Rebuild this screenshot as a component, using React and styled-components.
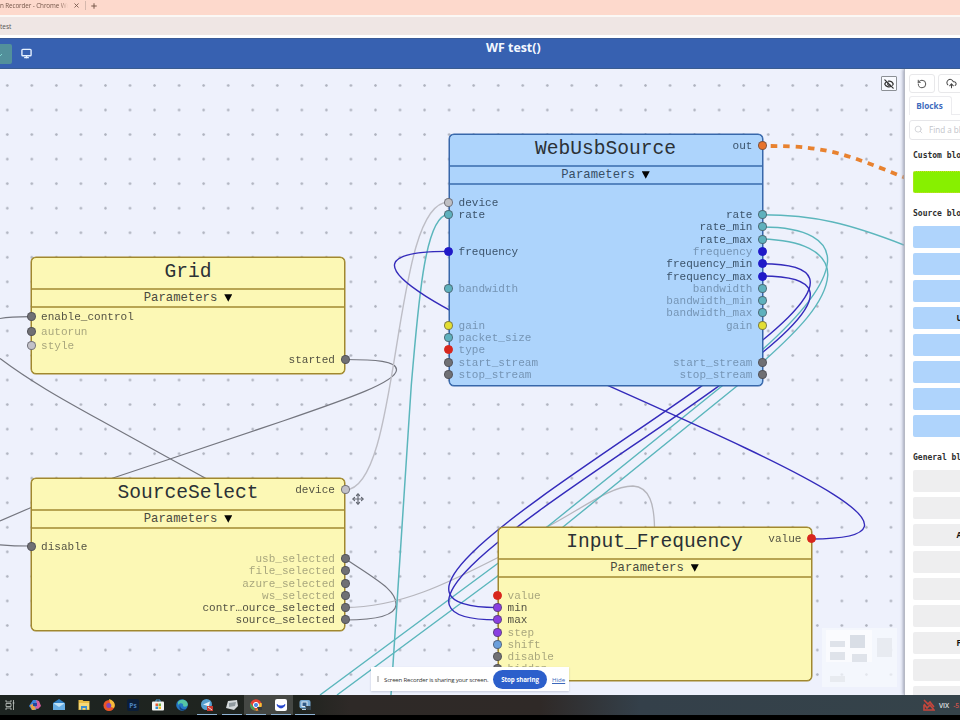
import React from "react";
import styled, { createGlobalStyle } from "styled-components";
import { EyeOff, RotateCcw, CloudUpload, Search, Monitor, Move, X, Plus } from "lucide-react";

const Global = createGlobalStyle`
  * { box-sizing: border-box; }
  body { margin: 0; overflow: hidden; background: #000; }
`;
const Screen = styled.div`
  width: 960px; height: 720px; display: flex; flex-direction: column;
  overflow: hidden; background: #000; position: relative;
  font-family: "Open Sans", sans-serif;
`;
const TabStrip = styled.div`
  height: 15px; flex: none; background: #fdd9cc; color: #76584b;
  display: flex; align-items: center; font-size: 6.3px; padding-bottom: 4px;
  white-space: nowrap;
`;
const TabTitle = styled.span`
  width: 68px; overflow: hidden; margin-right: 5px; letter-spacing: -0.1px;
  mask-image: linear-gradient(90deg, #000 88%, transparent);
`;
const TabRule = styled.i`width: 1px; height: 9px; background: #d5b8ad; margin: 0 4px 0 5px;`;
const UrlBar = styled.div`
  height: 23px; flex: none; background: #efe6e4; border-top: 2px solid #fbf8f5; border-bottom: 3px solid #fff;
  font-size: 6.5px; line-height: 19px; color: #555;
`;
const AppHeader = styled.header`
  height: 31px; flex: none; background: #3761b1; display: flex; align-items: center;
  border-top: 1px solid #3a5a96; border-bottom: 1px solid #3a5c90; color: #e6f1ff;
`;
const CheckButton = styled.div`
  width: 12px; height: 20px; border-radius: 0 2px 2px 0; background: #52909b; color: #7fd6d0;
  margin-right: 9px; display: flex; align-items: center;
`;
const AppTitle = styled.h1`
  margin: 0 0 13px 454px; font-size: 12.4px; font-weight: 700; color: #f4f8ff; line-height: 17px;
`;
const Main = styled.main`height: 626px; flex: none; display: flex; overflow: hidden;`;
const Canvas = styled.div`
  width: 904px; flex: none; position: relative; overflow: hidden; background-color: #eef1fc;
  background-image: radial-gradient(circle, #aeb2be 0 0.9px, rgba(174,178,190,0) 1.6px);
  background-size: 24.56px 24.56px; background-position: -5px 4.2px;
`;
const Wires = styled.svg`position: absolute; inset: 0; display: block;`;

const Node = styled.section`
  position: absolute; left: ${p => p.$x}px; top: ${p => p.$y - 69}px;
  width: 314px; height: ${p => p.$h}px; border-radius: 5px;
  border: 1px solid ${p => p.$line}; box-shadow: 0 0 0 0.5px ${p => p.$line};
  background: ${p => p.$fill}; color: ${p => p.$ink};
  font-family: "Liberation Mono", monospace;
`;
const NodeTitle = styled.div`
  height: 30px; text-align: center;
  font-size: 19.6px; line-height: 29px; color: #2b3136;
`;
const NodeParams = styled.div`
  height: 20px; border: solid ${p => p.$soft}; border-width: 2px 0;
  display: flex; justify-content: center; align-items: center; gap: 7px;
  font-size: 12.25px; line-height: 16px;
`;
const Arrow = styled.i`
  width: 8px; height: 7.5px; background: #050505; clip-path: polygon(0 0, 100% 0, 50% 100%);
`;
const Port = styled.div`
  position: absolute; ${p => (p.$right ? "right" : "left")}: -5.5px; top: ${p => p.$y}px;
  display: flex; flex-direction: ${p => (p.$right ? "row-reverse" : "row")};
  align-items: center; gap: 5.5px; height: 12px; font-size: 11.05px; line-height: 12px; white-space: nowrap;
`;
const Dot = styled.i`
  width: 9px; height: 9px; border-radius: 50%; background: ${p => p.$c};
  border: 1px solid ${p => p.$edge || "rgba(60,60,70,.6)"};
`;
const PortName = styled.span`opacity: ${p => (p.$dim ? 0.47 : 0.95)}; padding-top: 1px;`;

const EyeButton = styled.div`
  position: absolute; left: 881px; top: 7px; width: 16px; height: 15px; background: #f8faff;
  border: 1px solid #8c9096; border-radius: 1px; display: grid; place-items: center; color: #333;
`;
const Cursor = styled.div`position: absolute; left: 352px; top: 424px; height: 12px; color: #666a74; display: flex;`;
const MiniMap = styled.div`
  position: absolute; left: 822px; top: 559px; width: 75px; height: 59px; background: rgba(247,249,253,.72);
`;
const MiniView = styled.div`position: absolute; left: 4px; top: 2px; width: 46px; height: 32px; background: #fafbfe;`;
const MiniBlock = styled.div`
  position: absolute; left: ${p => p.$x}px; top: ${p => p.$y}px; width: ${p => p.$w}px; height: ${p => p.$h}px;
  background: ${p => p.$c || "#dfe3ea"};
`;

const Sidebar = styled.aside`
  flex: 1; min-width: 0; background: #fff; border-left: 1px solid #b6b9c4; overflow: hidden;
  box-shadow: -1px 0 3px #9ea3b5; position: relative; padding-top: 5px;
`;
const Tools = styled.div`display: flex; gap: 3px; margin-left: 4px; height: 19px;`;
const ToolButton = styled.div`
  width: 26px; height: 19px; flex: none; border: 1px solid #e8e8ea; border-radius: 3px;
  display: grid; place-items: center; color: #444;
`;
const Tabs = styled.div`margin: 3px 0 0 4px; height: 19px; display: flex;`;
const Tab = styled.div`
  width: 43px; flex: none; border: 1px solid #ececef; border-bottom: 0; border-radius: 3px 3px 0 0;
  color: #3e6bbd; font: 700 8.2px/18px "Open Sans", sans-serif; text-align: center; padding-right: 2px;
`;
const TabRest = styled.div`flex: 1; border-bottom: 1px solid #ececef;`;
const SearchBox = styled.div`
  margin: 5px 0 0 4px; width: 190px; height: 20px; border: 1px solid #e6e6e9; border-radius: 3px;
  display: flex; align-items: center; gap: 6px; padding-left: 4px; color: #c2c4ca;
  font-size: 8.1px; line-height: 16px; padding-bottom: 1px; white-space: nowrap;
`;
const GroupTitle = styled.h2`
  margin: ${p => p.$top}px 0 0 8px; height: 12px; white-space: nowrap; color: #2e2e2e;
  font: 700 8px/12px "DejaVu Sans Mono", monospace;
`;
const BlockList = styled.div`
  margin: ${p => p.$top}px 0 0 8px; display: grid; grid-auto-rows: 22px; gap: 5px; width: 190px;
`;
const Block = styled.div`
  background: ${p => p.$c}; border-radius: 2px; padding-left: 43.5px; ${p => p.$dotted && "border: 1px dotted #c9dc2c;"}
  font: 700 8px/22px "Open Sans", sans-serif; color: #111;
`;

const ShareBar = styled.div`
  position: absolute; left: 371px; top: 667px; width: 198px; height: 24px; background: #fff;
  box-shadow: 0 1px 2px rgba(70,80,110,.25); display: flex; align-items: center; font-size: 6.1px; color: #333;
  padding-left: 6px; white-space: nowrap;
`;
const Grip = styled.i`width: 2px; height: 6px; border: solid #ccc; border-width: 0 1px; margin-right: 5px;`;
const ShareText = styled.span`width: 109px; letter-spacing: -0.2px;`;
const StopButton = styled.div`
  width: 54px; height: 19px; border-radius: 10px; background: #2c5fcb; color: #fff; font-weight: 700;
  font-size: 6.2px; letter-spacing: -0.08px; line-height: 19px; text-align: center; margin-right: 5px;
`;
const HideLink = styled.a`color: #3d68bb; text-decoration: underline;`;

const Taskbar = styled.footer`
  height: 20px; flex: none; display: flex; align-items: center; justify-content: space-between;
  background: linear-gradient(90deg, #1d2421 0, #20241f 300px, #2e2927 350px, #2f2927 540px, #34404a 640px, #35434a 100%);
`;
const TaskIcons = styled.div`display: flex; margin-left: -2px;`;
const Task = styled.div`
  width: 24.6px; height: 20px; display: grid; place-items: center; background: ${p => (p.$on ? "#454844" : "none")};
`;
const TaskGlyph = styled.div`
  height: 20px; width: 20px; display: grid; place-items: center;
  box-shadow: ${p => (p.$run ? "inset 0 -1px #8fb3d4" : "none")};
`;
const Ticker = styled.div`
  width: 37px; display: flex; align-items: center; gap: 4px; overflow: hidden; white-space: nowrap;
  font: 600 6.6px "Open Sans", sans-serif; color: #e0e4e6;
`;
const TickerIcon = styled.svg`flex: none;`;
const Loss = styled.span`color: #d0524a;`;

const TEAL = "#5fb1bd", BLUE = "#2019c8", GRAY = "#707074", LIGHT = "#c2c1c8", RED = "#d8261d",
  YEL = "#e3de33", PUR = "#8a3fe0", SKY = "#6b9fdc";

const yellow = { fill: "#fcf8b5", line: "#a1882e", soft: "#b8a552", ink: "#4a4a3e" };
const blue = { fill: "#add4fc", line: "#3767aa", soft: "#5585c0", ink: "#364d64" };

const nodes = [
  { name: "Grid", x: 31, y: 257, h: 117, theme: yellow,
    left: [["enable_control", 316.7, GRAY], ["autorun", 331.3, GRAY, 1], ["style", 345.6, LIGHT, 1]],
    right: [["started", 359.5, GRAY]] },
  { name: "SourceSelect", x: 31, y: 478, h: 153, theme: yellow,
    left: [["disable", 546.2, GRAY]],
    right: [["device", 489.8, LIGHT], ["usb_selected", 558.3, GRAY, 1], ["file_selected", 570.6, GRAY, 1],
      ["azure_selected", 583, GRAY, 1], ["ws_selected", 595.2, GRAY, 1],
      ["contr…ource_selected", 607.5, GRAY], ["source_selected", 619.8, GRAY]] },
  { name: "WebUsbSource", x: 448.5, y: 134, h: 252, theme: blue,
    left: [["device", 202.3, "#bfbfc3"], ["rate", 214.6, TEAL], ["frequency", 251.4, BLUE], ["bandwidth", 288.3, TEAL, 1],
      ["gain", 325.3, YEL, 1], ["packet_size", 337.6, TEAL, 1], ["type", 349.9, RED, 1],
      ["start_stream", 362.1, GRAY, 1], ["stop_stream", 374.3, GRAY, 1]],
    right: [["out", 145.9, "#e8732b"], ["rate", 214.6, TEAL], ["rate_min", 226.9, TEAL], ["rate_max", 239.2, TEAL],
      ["frequency", 251.4, BLUE, 1], ["frequency_min", 263.8, BLUE], ["frequency_max", 276, BLUE],
      ["bandwidth", 288.3, TEAL, 1], ["bandwidth_min", 300.6, TEAL, 1], ["bandwidth_max", 312.9, TEAL, 1],
      ["gain", 325.3, YEL, 1], ["start_stream", 362.1, GRAY, 1], ["stop_stream", 374.3, GRAY, 1]] },
  { name: "Input_Frequency", x: 497.5, y: 527, h: 154, theme: yellow,
    left: [["value", 595.3, RED, 1], ["min", 607.6, PUR], ["max", 619.9, PUR], ["step", 632.2, PUR, 1],
      ["shift", 644.4, SKY, 1], ["disable", 656.6, GRAY, 1], ["hidden", 668.9, GRAY, 1]],
    right: [["value", 538.8, RED]] },
];

const wires = [
  ["M0 318.5 Q10 317 30 316.7", "#74767f", 1.2],
  ["M0 544.8 Q14 546 30 546", "#74767f", 1.2],
  ["M345 359.5 C375 359.5 397 361 396.5 370 C396 382 350 398 283 421 L170 459 L113 478 L30 508 L0 521", "#74767f", 1.2],
  ["M0 358.5 C30 381 60 398 100 420 L205 478 L345 558.5 C375 579 397 590 396 605 C395 617 370 620 345 620", "#74767f", 1.2],
  ["M345 607.5 C400 607.5 450 582 497 558 L547 527 C580 510 610 486 633 486 C650 487 654 505 654.5 527", "#b6b6bd", 1.3],
  ["M345 490 C402 490 391 202.3 448 202.3", "#bebec6", 1.4],
  ["M448 214.6 C424 216 418 310 411.3 385 C405 480 399 570 391 695", "#5bb6bc", 1.5],
  ["M762 214.8 C815 214.8 850 224 904 245", "#5bb6bc", 1.4],
  ["M762 227 C808 227 829 241 827.5 262 C825 290 790 325 762 350 L722 386 L547 527 L497 564 L320 695", "#5bb6bc", 1.4],
  ["M762 239 C800 240 828 251 827.8 275 C826 303 795 333 765 360 L737 386 L563 527 L497 576.5 L337 695", "#5bb6bc", 1.4],
  ["M811 539 C1091 539 168 251.4 448 251.4", "#342bbb", 1.4],
  ["M762 263.8 C1002 263.8 257 607.6 497 607.6", "#342bbb", 1.4],
  ["M762 276 C1002 276 257 619.9 497 619.9", "#342bbb", 1.4],
];

function FlowNode({ n }) {
  const t = n.theme;
  const port = (right) => ([label, y, c, dim]) => (
    <Port key={label} $right={right} $y={y - n.y - 7}>
      <Dot $c={c} $edge={c === BLUE || c === RED ? c : undefined} />
      <PortName $dim={dim}>{label}</PortName>
    </Port>
  );
  return (
    <Node $x={n.x} $y={n.y} $h={n.h} $line={t.line} $fill={t.fill} $ink={t.ink}>
      <NodeTitle>{n.name}</NodeTitle>
      <NodeParams $soft={t.soft}>Parameters<Arrow /></NodeParams>
      {n.left.map(port(false))}
      {n.right.map(port(true))}
    </Node>
  );
}

const taskIcons = [
  { d: <g fill="none" stroke="#c5cbc8" strokeWidth=".8"><path d="M2 1v2h5V1M2 11V9h5v2M2 4.500h5v3H2zM9.500 1v10M8.500 4h2" /></g> },
  { d: <><path d="M4 1h4l2 4-3 6H3L0 7z" fill="#3c84dc" /><path d="M7 1l3 1 2 5-3 3-3-1 2-4z" fill="#d85fa0" /><path d="M1 6l3-1 3 5-2 1H3z" fill="#e9a345" /><path d="M4 4h4v3H4z" fill="#27459a" /></> },
  { d: <><path d="M0 4l6-4 6 4v7H0z" fill="#2f7fc4" /><path d="M1 4h10v6H1z" fill="#bfe2f6" /><path d="M0 4l6 4 6-4v7H0z" fill="#69aee4" /></> },
  { d: <><path d="M0.500 1h4l1 1h6v9h-11z" fill="#e9bd45" /><path d="M1 4h10v6H1z" fill="#f6d978" /><path d="M3 7h6v4H7.500V9h-3v2H3z" fill="#3c8dce" /></> },
  { d: <><circle cx="6" cy="6.500" r="5.500" fill="#ec5528" /><path d="M6 0c5 1 7 6 5 9L8 8z" fill="#f7bc3a" /><circle cx="5.800" cy="6.500" r="2.500" fill="#8347b5" /></> },
  { d: <><rect width="12" height="12" rx="2" fill="#0b1e38" /><text x="6" y="8.500" fontSize="6.500" fontWeight="700" textAnchor="middle" fill="#4b83c0" fontFamily="Open Sans">Ps</text></> },
  { d: <><path d="M4 3V1h4v2" stroke="#4da2d8" fill="none" /><rect y="2.500" width="12" height="9" rx="1" fill="#f2f4f2" /><path d="M3.500 4.500H6V7H3.500z" fill="#e65b32" /><path d="M6.500 4.500H9V7H6.500z" fill="#6fb345" /><path d="M3.500 7.500H6V10H3.500z" fill="#348ed2" /><path d="M6.500 7.500H9V10H6.500z" fill="#edb92d" /></> },
  { d: <><circle cx="6" cy="6" r="5.800" fill="#2477c4" /><path d="M2 3c3-4 10-2 9.800 3C11 8 8 8 7 7c1-3-3-4-5-1z" fill="#55c5a4" /><path d="M4 6c0 4 4 5 6 4-3 3-8 1-6-4z" fill="#123f7d" /></> },
  { run: 1, d: <><circle cx="5.500" cy="5.500" r="5.500" fill="#579fd0" /><path d="M2 5.500l7-3-1.500 6-2-2z" fill="#e1eef8" /><path d="M6 7h6v5H6z" fill="#ca3a32" /><path d="M7 8l4 3" stroke="#fff" strokeWidth=".8" /></> },
  { run: 1, d: <><path d="M2 2l9-1 1 6-4 4-8-2z" fill="#d3d8da" /><path d="M3 4l7-1-1 4-6 1z" fill="#909a9f" /></> },
  { run: 1, on: 1, d: <><circle cx="6" cy="6" r="5.800" fill="#e54233" /><path d="M.5 4L6 11.800A5.800 5.800 0 0 1 .5 4z" fill="#41a456" /><path d="M6 11.800L10 4h1.500c1 4-1.500 7.500-5.500 7.800z" fill="#f3c135" /><circle cx="6" cy="6" r="2.600" fill="#4a89e4" stroke="#fff" /><path d="M7 8h5v3H8z" fill="#363b3e" /></> },
  { run: 1, on: 1, d: <><rect width="12" height="12" rx="2" fill="#fff" /><path d="M2 5.500c1 4.500 7 4.500 8 0-2 2-6 2-8 0z" fill="#2546ce" stroke="#2546ce" /></> },
  { run: 1, d: <><rect x=".5" y="1" width="11" height="8.500" rx="2" fill="#77a9d4" /><rect x="3" y="3" width="5" height="4.500" fill="#315a88" stroke="#dbeaf5" /><path d="M6 7h6v4H8z" fill="#33424d" /><path d="M3 10.500h4" stroke="#b6d0e5" /></> },
];

const blue8 = ["", "", "", "U", "", "", "", ""];
const gray9 = ["", "", "A", "", "", "", "F", "", ""];

export default function App() {
  return (
    <Screen>
      <Global />
      <TabStrip>
        <TabTitle>n Recorder - Chrome We:</TabTitle>
        <X size={7} strokeWidth={3} /><TabRule /><Plus size={8} strokeWidth={3} />
      </TabStrip>
      <UrlBar>test</UrlBar>
      <AppHeader>
        <CheckButton><svg width="5" height="8" viewBox="0 0 5 8"><path d="M0 6L2 4" stroke="currentColor" /></svg></CheckButton>
        <Monitor size={11} strokeWidth={3} />
        <AppTitle>WF test()</AppTitle>
      </AppHeader>
      <Main>
        <Canvas>
          <Wires width="904" height="626" viewBox="0 69 904 626" fill="none">
            {wires.map(([d, c, w]) => <path key={d} d={d} stroke={c} strokeWidth={w} />)}
            <path d="M770.7 146 C830 146 850 156 906 178" stroke="#e8822f" strokeWidth="3.8" strokeDasharray="6.500 5.900" />
          </Wires>
          {nodes.map(n => <FlowNode key={n.name} n={n} />)}
          <Cursor><Move size={12} strokeWidth={2.4} /></Cursor>
          <EyeButton><EyeOff size={10} strokeWidth={3} /></EyeButton>
          <MiniMap>
            <MiniView />
            <MiniBlock $x={8} $y={13} $w={15} $h={6} />
            <MiniBlock $x={28} $y={7} $w={15} $h={13} $c="#d9dee6" />
            <MiniBlock $x={8} $y={24} $w={15} $h={8} />
            <MiniBlock $x={30} $y={26} $w={15} $h={8} />
            <MiniBlock $x={55} $y={10} $w={15} $h={19} $c="#e8ebf1" />
            <MiniBlock $x={8} $y={48} $w={15} $h={6} $c="#e8ebf0" />
          </MiniMap>
        </Canvas>
        <Sidebar>
          <Tools>
            <ToolButton><RotateCcw size={10} strokeWidth={2.2} /></ToolButton>
            <ToolButton><CloudUpload size={11} strokeWidth={2.2} /></ToolButton>
          </Tools>
          <Tabs><Tab>Blocks</Tab><TabRest /></Tabs>
          <SearchBox><Search size={9} strokeWidth={1.8} />Find a block</SearchBox>
          <GroupTitle $top={9.5}>Custom blocks</GroupTitle>
          <BlockList $top={9.5}><Block $c="#87f000" $dotted /></BlockList>
          <GroupTitle $top={15}>Source blocks</GroupTitle>
          <BlockList $top={6}>{blue8.map((t, i) => <Block key={i} $c="#afd4fc">{t}</Block>)}</BlockList>
          <GroupTitle $top={15}>General blocks</GroupTitle>
          <BlockList $top={6}>{gray9.map((t, i) => <Block key={i} $c="#eeeeef">{t}</Block>)}</BlockList>
        </Sidebar>
      </Main>
      <Taskbar>
        <TaskIcons>
          {taskIcons.map((t, i) => (
            <Task key={i} $on={t.on}>
              <TaskGlyph $run={t.run}><svg width="12" height="12" viewBox="0 0 12 12">{t.d}</svg></TaskGlyph>
            </Task>
          ))}
        </TaskIcons>
        <Ticker>
          <TickerIcon width="12" height="12" viewBox="0 0 12 12" fill="none" stroke="#c6463c" strokeWidth="1.600"><path d="M1 1l4 4 2-2 4 5M1 5l3 4 3-3 4 5H1V6" /></TickerIcon>
          VIX <Loss>-5.2%</Loss>
        </Ticker>
      </Taskbar>
      <ShareBar>
        <Grip /><ShareText>Screen Recorder is sharing your screen.</ShareText>
        <StopButton>Stop sharing</StopButton><HideLink>Hide</HideLink>
      </ShareBar>
    </Screen>
  );
}
